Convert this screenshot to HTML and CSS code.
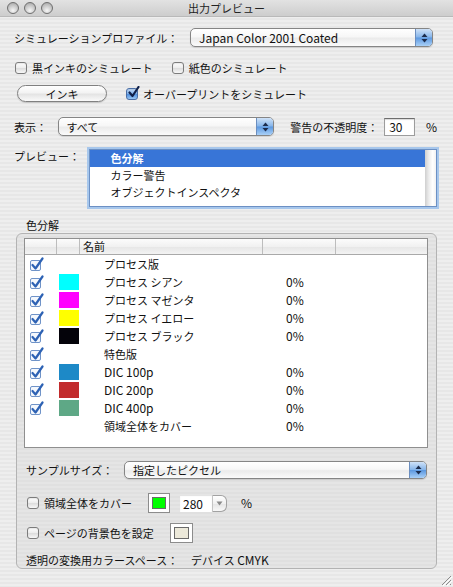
FILE: index.html
```html
<!DOCTYPE html>
<html lang="ja">
<head>
<meta charset="utf-8">
<title>出力プレビュー</title>
<link rel="stylesheet" href="styles.css">
</head>
<body>
<div class="window">
  <header class="titlebar">
    <div class="lights"><span class="light"></span><span class="light"></span><span class="light"></span></div>
    <div class="title">出力プレビュー</div>
    <div class="tb-spacer"></div>
  </header>
  <main class="content">
    <div class="row row-profile">
      <span class="lbl lbl-profile">シミュレーションプロファイル：</span>
      <div class="popup popup-profile">
        <span class="popup-text latin">Japan Color 2001 Coated</span>
        <span class="stepper"><svg width="9" height="12" viewBox="0 0 9 12"><polygon points="1.5,5 4.5,1.5 7.5,5" fill="#1c2c4c"/><polygon points="1.5,7 4.5,10.5 7.5,7" fill="#1c2c4c"/></svg></span>
      </div>
    </div>

    <div class="row row-checks">
      <label class="check"><span class="cb"></span><span>黒インキのシミュレート</span></label>
      <label class="check check-paper"><span class="cb"></span><span>紙色のシミュレート</span></label>
    </div>

    <div class="row row-ink">
      <button class="pill">インキ</button>
      <label class="check check-over"><span class="cb cb-on"><svg width="13" height="13" viewBox="0 0 13 13"><path d="M2.5 6.5 L5.5 10 L11.5 1" fill="none" stroke="#10204a" stroke-width="2.2" stroke-linecap="round" stroke-linejoin="round"/></svg></span><span>オーバープリントをシミュレート</span></label>
    </div>

    <div class="row row-view">
      <span class="lbl lbl-view">表示：</span>
      <div class="popup popup-view">
        <span class="popup-text">すべて</span>
        <span class="stepper"><svg width="9" height="12" viewBox="0 0 9 12"><polygon points="1.5,5 4.5,1.5 7.5,5" fill="#1c2c4c"/><polygon points="1.5,7 4.5,10.5 7.5,7" fill="#1c2c4c"/></svg></span>
      </div>
      <span class="lbl lbl-opacity">警告の不透明度：</span>
      <span class="field field-opacity latin">30</span>
      <span class="lbl lbl-pct latin">%</span>
    </div>

    <div class="row row-preview">
      <span class="lbl lbl-preview">プレビュー：</span>
      <div class="listbox">
        <ul class="list-items">
          <li class="list-item sel">色分解</li>
          <li class="list-item">カラー警告</li>
          <li class="list-item">オブジェクトインスペクタ</li>
        </ul>
        <div class="list-scroll"></div>
      </div>
    </div>

    <div class="group-label">色分解</div>
    <section class="group">
      <div class="table">
        <div class="thead">
          <div class="th"></div>
          <div class="th"></div>
          <div class="th th-name">名前</div>
          <div class="th"></div>
          <div class="th th-last"></div>
        </div>
        <div class="tbody">
          <div class="tr"><span class="td td-check"><svg class="tick" width="15" height="14" viewBox="0 0 15 14"><rect x="1.5" y="3.5" width="10" height="10" rx="1.5" fill="#f4f8fd" stroke="#6f93c8"/><path d="M3.5 8 L6.5 11.5 L13.5 1.5" fill="none" stroke="#2d62b4" stroke-width="2.2" stroke-linecap="round" stroke-linejoin="round"/></svg></span><span class="td td-sw"></span><span class="td td-name">プロセス版</span><span class="td td-pct"></span><span class="td"></span></div>
          <div class="tr"><span class="td td-check"><svg class="tick" width="15" height="14" viewBox="0 0 15 14"><rect x="1.5" y="3.5" width="10" height="10" rx="1.5" fill="#f4f8fd" stroke="#6f93c8"/><path d="M3.5 8 L6.5 11.5 L13.5 1.5" fill="none" stroke="#2d62b4" stroke-width="2.2" stroke-linecap="round" stroke-linejoin="round"/></svg></span><span class="td td-sw"><span class="swatch sw-c"></span></span><span class="td td-name">プロセス シアン</span><span class="td td-pct latin">0%</span><span class="td"></span></div>
          <div class="tr"><span class="td td-check"><svg class="tick" width="15" height="14" viewBox="0 0 15 14"><rect x="1.5" y="3.5" width="10" height="10" rx="1.5" fill="#f4f8fd" stroke="#6f93c8"/><path d="M3.5 8 L6.5 11.5 L13.5 1.5" fill="none" stroke="#2d62b4" stroke-width="2.2" stroke-linecap="round" stroke-linejoin="round"/></svg></span><span class="td td-sw"><span class="swatch sw-m"></span></span><span class="td td-name">プロセス マゼンタ</span><span class="td td-pct latin">0%</span><span class="td"></span></div>
          <div class="tr"><span class="td td-check"><svg class="tick" width="15" height="14" viewBox="0 0 15 14"><rect x="1.5" y="3.5" width="10" height="10" rx="1.5" fill="#f4f8fd" stroke="#6f93c8"/><path d="M3.5 8 L6.5 11.5 L13.5 1.5" fill="none" stroke="#2d62b4" stroke-width="2.2" stroke-linecap="round" stroke-linejoin="round"/></svg></span><span class="td td-sw"><span class="swatch sw-y"></span></span><span class="td td-name">プロセス イエロー</span><span class="td td-pct latin">0%</span><span class="td"></span></div>
          <div class="tr"><span class="td td-check"><svg class="tick" width="15" height="14" viewBox="0 0 15 14"><rect x="1.5" y="3.5" width="10" height="10" rx="1.5" fill="#f4f8fd" stroke="#6f93c8"/><path d="M3.5 8 L6.5 11.5 L13.5 1.5" fill="none" stroke="#2d62b4" stroke-width="2.2" stroke-linecap="round" stroke-linejoin="round"/></svg></span><span class="td td-sw"><span class="swatch sw-k"></span></span><span class="td td-name">プロセス ブラック</span><span class="td td-pct latin">0%</span><span class="td"></span></div>
          <div class="tr"><span class="td td-check"><svg class="tick" width="15" height="14" viewBox="0 0 15 14"><rect x="1.5" y="3.5" width="10" height="10" rx="1.5" fill="#f4f8fd" stroke="#6f93c8"/><path d="M3.5 8 L6.5 11.5 L13.5 1.5" fill="none" stroke="#2d62b4" stroke-width="2.2" stroke-linecap="round" stroke-linejoin="round"/></svg></span><span class="td td-sw"></span><span class="td td-name">特色版</span><span class="td td-pct"></span><span class="td"></span></div>
          <div class="tr"><span class="td td-check"><svg class="tick" width="15" height="14" viewBox="0 0 15 14"><rect x="1.5" y="3.5" width="10" height="10" rx="1.5" fill="#f4f8fd" stroke="#6f93c8"/><path d="M3.5 8 L6.5 11.5 L13.5 1.5" fill="none" stroke="#2d62b4" stroke-width="2.2" stroke-linecap="round" stroke-linejoin="round"/></svg></span><span class="td td-sw"><span class="swatch sw-100"></span></span><span class="td td-name latin">DIC 100p</span><span class="td td-pct latin">0%</span><span class="td"></span></div>
          <div class="tr"><span class="td td-check"><svg class="tick" width="15" height="14" viewBox="0 0 15 14"><rect x="1.5" y="3.5" width="10" height="10" rx="1.5" fill="#f4f8fd" stroke="#6f93c8"/><path d="M3.5 8 L6.5 11.5 L13.5 1.5" fill="none" stroke="#2d62b4" stroke-width="2.2" stroke-linecap="round" stroke-linejoin="round"/></svg></span><span class="td td-sw"><span class="swatch sw-200"></span></span><span class="td td-name latin">DIC 200p</span><span class="td td-pct latin">0%</span><span class="td"></span></div>
          <div class="tr"><span class="td td-check"><svg class="tick" width="15" height="14" viewBox="0 0 15 14"><rect x="1.5" y="3.5" width="10" height="10" rx="1.5" fill="#f4f8fd" stroke="#6f93c8"/><path d="M3.5 8 L6.5 11.5 L13.5 1.5" fill="none" stroke="#2d62b4" stroke-width="2.2" stroke-linecap="round" stroke-linejoin="round"/></svg></span><span class="td td-sw"><span class="swatch sw-400"></span></span><span class="td td-name latin">DIC 400p</span><span class="td td-pct latin">0%</span><span class="td"></span></div>
          <div class="tr"><span class="td td-check"></span><span class="td td-sw"></span><span class="td td-name">領域全体をカバー</span><span class="td td-pct latin">0%</span><span class="td"></span></div>
        </div>
      </div>

      <div class="grow grow-sample">
        <span class="lbl lbl-sample">サンプルサイズ：</span>
        <div class="popup popup-sample">
          <span class="popup-text">指定したピクセル</span>
          <span class="stepper"><svg width="9" height="12" viewBox="0 0 9 12"><polygon points="1.5,5 4.5,1.5 7.5,5" fill="#1c2c4c"/><polygon points="1.5,7 4.5,10.5 7.5,7" fill="#1c2c4c"/></svg></span>
        </div>
      </div>

      <div class="grow grow-cover">
        <label class="check"><span class="cb"></span><span>領域全体をカバー</span></label>
        <span class="well well-cover"><span class="well-in well-green"></span></span>
        <span class="combo"><span class="combo-field latin">280</span><span class="combo-btn"><svg width="7" height="5" viewBox="0 0 7 5"><polygon points="0.5,0.5 6.5,0.5 3.5,4.5" fill="#8a8a8a"/></svg></span></span>
        <span class="lbl lbl-pct2 latin">%</span>
      </div>

      <div class="grow grow-bg">
        <label class="check"><span class="cb"></span><span>ページの背景色を設定</span></label>
        <span class="well well-bg"><span class="well-in well-beige"></span></span>
      </div>

      <div class="grow grow-space">
        <span class="lbl lbl-space">透明の変換用カラースペース：</span>
        <span class="lbl">デバイス <span class="latin">CMYK</span></span>
      </div>
    </section>
  </main>
  <div class="grip"><svg width="12" height="12" viewBox="0 0 12 12"><path d="M11 2 L2 11 M11 6 L6 11 M11 10 L10 11" stroke="#8c8c8c" stroke-width="1"/><path d="M12 3 L3 12 M12 7 L7 12" stroke="#ffffff" stroke-width="1"/></svg></div>
</div>
</body>
</html>
```

FILE: styles.css
```css
* { box-sizing: border-box; }
html, body { margin: 0; padding: 0; }
body {
  font-family: "Noto Sans CJK JP", "Noto Sans", sans-serif;
  font-size: 11px;
  line-height: 14px;
  color: #111;
  background: #ececec;
}
ul { margin: 0; padding: 0; list-style: none; }
.latin { font-size: 12px; }

.window {
  width: 453px;
  height: 587px;
  position: relative;
  overflow: hidden;
  background: repeating-linear-gradient(to bottom, #eeeeee 0, #eeeeee 2px, #e7e7e7 2px, #e7e7e7 4px);
}

/* title bar */
.titlebar {
  height: 17px;
  display: grid;
  grid-template-columns: 1fr auto 1fr;
  align-items: center;
  background: linear-gradient(#e2e2e2, #cdcdcd);
  border-bottom: 1px solid #b9b9b9;
}
.lights { display: flex; gap: 5px; padding-left: 7px; }
.light {
  width: 12px; height: 12px; border-radius: 50%;
  border: 1px solid #6f6f6f;
  background: radial-gradient(circle at 50% 75%, #f6f6f6 0, #d0d0d0 45%, #a0a0a0 100%);
}
.title { font-size: 11px; color: #222; }

/* content */
.content { padding: 0 16px 0 14px; }
.row { display: flex; align-items: center; }
.lbl { white-space: nowrap; }

.popup {
  display: flex; align-items: center;
  height: 19px;
  border: 1px solid #858585;
  border-radius: 5px;
  background: linear-gradient(#ffffff, #f7f7f7 45%, #ebebeb 55%, #fbfbfb);
  box-shadow: 0 1px 1px rgba(0,0,0,0.12);
  padding-left: 8px;
  overflow: hidden;
}
.popup-text { flex: 1; white-space: nowrap; }
.stepper {
  width: 17px; align-self: stretch;
  display: flex; align-items: center; justify-content: center;
  border-left: 1px solid #6b8ebf;
  background: linear-gradient(#cfe2f8, #86b5ea 48%, #5c98e0 52%, #a9d0f7);
}

.row-profile { margin-top: 11px; }
.lbl-profile { width: 176px; }
.popup-profile { width: 243px; }

.row-checks { margin-top: 14px; height: 14px; padding-left: 1px; }
.check { display: flex; align-items: center; white-space: nowrap; }
.cb {
  width: 12px; height: 12px; flex: none;
  border: 1px solid #7c7c7c; border-radius: 3px;
  background: linear-gradient(#fefefe, #ececec 50%, #dedede 55%, #f7f7f7);
  box-shadow: inset 0 1px 1px rgba(0,0,0,0.08);
  margin-right: 5px;
  display: flex; align-items: center; justify-content: center;
}
.cb svg { margin-left: 2px; margin-top: -2px; flex: none; }
.cb-on {
  border-color: #4a6ea6;
  background: linear-gradient(#c4dcf7, #7fb0ea 48%, #4f8fde 52%, #98c6f4);
}
.check-paper { margin-left: 19px; }

.row-ink { margin-top: 10px; height: 17px; }
.pill {
  width: 90px; height: 17px; margin: 0 0 0 3px; padding: 0;
  font: inherit; color: #111;
  border: 1px solid #808080; border-radius: 9px;
  background: linear-gradient(#ffffff, #f3f3f3 45%, #e4e4e4 55%, #fafafa);
  box-shadow: 0 1px 1px rgba(0,0,0,0.15);
}
.check-over { margin-left: 19px; }

.row-view { margin-top: 15px; }
.lbl-view { width: 44px; }
.popup-view { width: 219px; }
.lbl-opacity { margin-left: 16px; width: 95px; }
.field {
  display: block; height: 18px; line-height: 16px;
  background: #fff;
  border: 1px solid #9c9c9c; border-top-color: #6e6e6e;
  box-shadow: inset 0 1px 1px rgba(0,0,0,0.15);
  padding-left: 4px;
}
.field-opacity { width: 31px; }
.lbl-pct { margin-left: 11px; }

.row-preview { margin-top: 13px; align-items: flex-start; }
.lbl-preview { width: 76px; padding-top: 0px; }
.listbox {
  width: 350px; height: 58px;
  display: flex;
  background: #fff;
  border: 1px solid #6c90c4;
  box-shadow: 0 0 0 2px #a7c7ec;
}
.list-items { flex: 1; }
.list-item { height: 17px; line-height: 17px; padding-left: 20px; white-space: nowrap; }
.list-item.sel { background: #3875d7; color: #fff; font-weight: bold; }
.list-scroll { width: 11px; background: linear-gradient(to right, #cfcfcf, #ececec 35%, #ffffff 70%, #f2f2f2); }

.group-label { margin: 11px 0 0 12px; height: 14px; }
.group {
  margin: 1px 0 0 2px;
  width: 421px; height: 336px;
  border: 1px solid #b3b3b3;
  border-radius: 6px;
  background: repeating-linear-gradient(to bottom, #e5e5e5 0, #e5e5e5 2px, #e0e0e0 2px, #e0e0e0 4px);
  padding: 4px 8px 0 7px;
}

.table { height: 210px; border: 1px solid #8f8f8f; background: #fff; }
.thead, .tr {
  display: grid;
  grid-template-columns: 32px 23px 183px 73px 1fr;
}
.thead {
  height: 16px;
  background: linear-gradient(#fcfcfc, #f1f1f1 50%, #e7e7e7 55%, #f3f3f3);
  border-bottom: 1px solid #a9a9a9;
}
.th { border-right: 1px solid #bdbdbd; line-height: 15px; }
.th-last { border-right: none; }
.th-name { padding-left: 3px; }
.tr { height: 18px; align-items: center; }
.td { white-space: nowrap; display: flex; align-items: center; height: 18px; }
.td-check { padding-left: 4px; }
.td-sw { padding-left: 2px; }
.td-name { padding-left: 24px; }
.td-pct { padding-left: 23px; }
.swatch { display: block; width: 20px; height: 16px; }
.sw-c { background: #00ffff; }
.sw-m { background: #ff00ff; }
.sw-y { background: #ffff00; }
.sw-k { background: #04030a; }
.sw-100 { background: #1d89c7; }
.sw-200 { background: #c22b2c; }
.sw-400 { background: #5ea886; }

.grow { display: flex; align-items: center; }
.grow-sample { margin-top: 13px; padding-left: 2px; }
.lbl-sample { width: 98px; }
.popup-sample { width: 303px; height: 18px; }

.grow-cover { margin-top: 14px; height: 20px; padding-left: 3px; }
.grow-bg { margin-top: 10px; height: 20px; padding-left: 3px; }
.well {
  display: flex; align-items: center; justify-content: center;
  height: 20px;
  background: #fff;
  border: 1px solid #8c8c8c;
}
.well-cover { width: 22px; margin-left: 16px; }
.well-bg { width: 23px; margin-left: 16px; }
.well-in { display: block; width: 14px; height: 12px; border: 1px solid #6a6a6a; }
.well-green { background: #00ff00; }
.well-beige { background: #ece9da; width: 15px; }
.combo { display: flex; height: 17px; margin-left: 10px; }
.combo-field {
  width: 32px; background: #fff; padding-left: 3px; line-height: 17px;
  box-shadow: inset 0 1px 1px rgba(0,0,0,0.12);
}
.combo-btn {
  width: 15px; display: flex; align-items: center; justify-content: center;
  border: 1px solid #a2a2a2; border-left-color: #c4c4c4;
  border-radius: 0 6px 6px 0;
  background: linear-gradient(#ffffff, #f1f1f1 50%, #e6e6e6 55%, #f8f8f8);
}
.lbl-pct2 { margin-left: 14px; }

.grow-space { margin-top: 10px; height: 14px; padding-left: 2px; }
.lbl-space { width: 165px; }

.grip { position: absolute; right: 1px; bottom: 1px; width: 12px; height: 12px; }
```
